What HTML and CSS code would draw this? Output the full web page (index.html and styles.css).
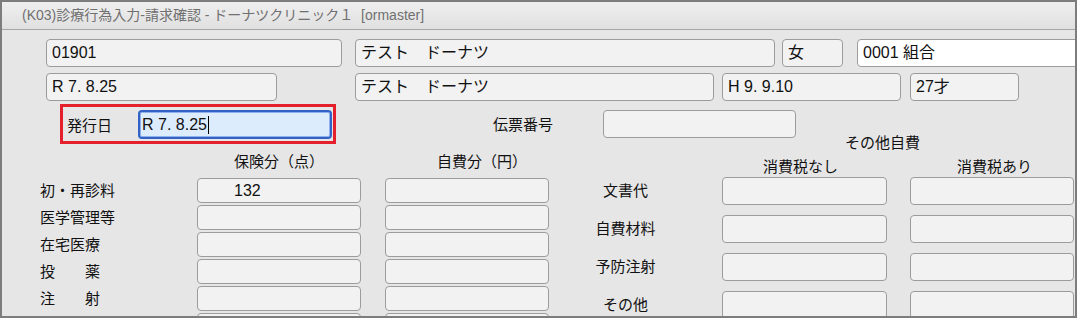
FILE: index.html
```html
<!DOCTYPE html>
<html lang="ja">
<head>
  <meta charset="UTF-8" />
  <title>(K03)診療行為入力-請求確認</title>
  <link rel="stylesheet" href="styles.css">
</head>
<body>
  <div class="window">
    <div class="titlebar">(K03)診療行為入力-請求確認 - ドーナツクリニック１&nbsp; [ormaster]</div>

    <div class="content">
      <!-- patient header -->
      <div class="row row-first">
        <div class="field w-id">01901</div>
        <div class="field w-kana">テスト　ドーナツ</div>
        <div class="field w-sex">女</div>
        <div class="field field-white w-ins">0001 組合</div>
      </div>
      <div class="row row-second">
        <div class="field w-date">R 7. 8.25</div>
        <div class="field w-name">テスト　ドーナツ</div>
        <div class="field w-birth">H 9. 9.10</div>
        <div class="field w-age">27才</div>
      </div>

      <div class="issue-row">
        <div class="issue-box">
          <span class="issue-label">発行日</span>
          <div class="field field-focus">R 7. 8.25<span class="caret"></span></div>
        </div>
        <span class="slip-label">伝票番号</span>
        <div class="field slip-field"></div>
        <span class="other-title">その他自費</span>
      </div>

      <div class="lower">
        <section class="fees">
          <div class="fees-head">
            <span></span>
            <span class="head-ins">保険分（点）</span>
            <span class="head-self">自費分（円）</span>
          </div>
          <div class="fees-grid">
            <span class="fee-label">初・再診料</span>
            <div class="field fee fee-num">132</div>
            <div class="field fee"></div>

            <span class="fee-label">医学管理等</span>
            <div class="field fee"></div>
            <div class="field fee"></div>

            <span class="fee-label">在宅医療</span>
            <div class="field fee"></div>
            <div class="field fee"></div>

            <span class="fee-label">投　　薬</span>
            <div class="field fee"></div>
            <div class="field fee"></div>

            <span class="fee-label">注　　射</span>
            <div class="field fee"></div>
            <div class="field fee"></div>

            <span class="fee-label"></span>
            <div class="field fee"></div>
            <div class="field fee"></div>
          </div>
        </section>

        <section class="extras">
          <div class="extras-head">
            <span></span>
            <span class="head-notax">消費税なし</span>
            <span class="head-tax">消費税あり</span>
          </div>
          <div class="extras-grid">
            <span class="extra-label">文書代</span>
            <div class="field extra"></div>
            <div class="field extra"></div>

            <span class="extra-label">自費材料</span>
            <div class="field extra"></div>
            <div class="field extra"></div>

            <span class="extra-label">予防注射</span>
            <div class="field extra"></div>
            <div class="field extra"></div>

            <span class="extra-label">その他</span>
            <div class="field extra"></div>
            <div class="field extra"></div>
          </div>
        </section>
      </div>
    </div>
  </div>
</body>
</html>
```

FILE: styles.css
```css
:root {
  --frame: #7d7d7d;
  --panel: #e6e6e6;
  --field: #f2f2f2;
  --field-border: #9c9c9c;
  --focus-blue: #3262c6;
  --focus-bg: #dcecfd;
  --mark-red: #e3202b;
}

* {
  box-sizing: border-box;
}

body, html {
  margin: 0;
  background: var(--panel);
  font-family: 'Liberation Sans', 'Noto Sans CJK JP', sans-serif;
  color: #111;
}

.window {
  width: 1077px;
  height: 318px;
  border: 2px solid var(--frame);
  background: var(--panel);
  overflow: hidden;
}

.titlebar {
  height: 28px;
  line-height: 27px;
  padding-left: 20px;
  font-size: 14px;
  color: #707070;
  background: linear-gradient(#efefef, #e0e0e0);
  border-bottom: 1px solid #a7a7a7;
  white-space: nowrap;
}

.content {
  padding-top: 9px;
}

/* generic entry box */
.field {
  flex-shrink: 0;
  height: 28px;
  line-height: 26px;
  padding-left: 5px;
  font-size: 16px;
  background: var(--field);
  border: 1px solid var(--field-border);
  border-radius: 4px;
  white-space: nowrap;
}

.field-white {
  background: #fff;
}

.row {
  display: flex;
  padding-left: 44px;
}

.row-second {
  margin-top: 6px;
}

.w-id { width: 296px; }
.w-kana { width: 420px; margin-left: 13px; }
.w-sex { width: 61px; margin-left: 7px; }
.w-ins { width: 240px; margin-left: 14px; }

.w-date { width: 231px; }
.w-name { width: 359px; margin-left: 78px; }
.w-birth { width: 179px; margin-left: 8px; }
.w-age { width: 109px; margin-left: 9px; }

/* issue date row */
.issue-row {
  display: flex;
  align-items: flex-start;
  height: 48px;
  margin-top: 3px;
}

.issue-box {
  display: flex;
  align-items: center;
  margin-left: 58px;
  padding: 3px 1px 2px 4px;
  border: 3px solid var(--mark-red);
}

.issue-label {
  width: 71px;
  font-size: 15px;
}

.field-focus {
  width: 194px;
  height: 29px;
  line-height: 25px;
  padding-left: 2px;
  background: var(--focus-bg);
  border: 2px solid var(--focus-blue);
  box-shadow: inset 0 0 0 1px #8fb0ec;
}

.caret {
  display: inline-block;
  width: 1px;
  height: 18px;
  margin-left: 1px;
  vertical-align: -4px;
  background: #000;
}

.slip-label {
  width: 60px;
  margin: 12px 0 0 157px;
  line-height: 18px;
  font-size: 15px;
}

.slip-field {
  width: 193px;
  margin: 6px 0 0 50px;
}

.other-title {
  align-self: flex-end;
  margin-left: 49px;
  line-height: 18px;
  font-size: 15px;
}

/* fee tables */
.lower {
  display: flex;
}

.fees {
  padding-left: 38px;
}

.fees-head,
.fees-grid {
  display: grid;
  grid-template-columns: 133px 164px 164px;
  column-gap: 24px;
}

.fees-head {
  margin-top: 1px;
  line-height: 18px;
  font-size: 15px;
}

.head-ins {
  text-align: center;
}

.head-self {
  padding-left: 52px;
}

.fees-grid {
  margin-top: 7px;
  row-gap: 2px;
}

.fee-label {
  line-height: 25px;
  font-size: 15px;
}

.fee {
  height: 25px;
  line-height: 23px;
}

.fee-num {
  padding-left: 36px;
}

.extras-head,
.extras-grid {
  display: grid;
  grid-template-columns: 150px 165px 164px;
  column-gap: 23px;
}

.extras-head {
  margin-top: 6px;
  line-height: 18px;
  font-size: 15px;
  text-align: center;
}

.head-notax {
  padding-right: 8px;
}

.head-tax {
  padding-left: 5px;
}

.extras-grid {
  margin-top: 1px;
  row-gap: 10px;
}

.extra-label {
  padding-left: 3px;
  line-height: 28px;
  font-size: 15px;
  text-align: center;
}
```
